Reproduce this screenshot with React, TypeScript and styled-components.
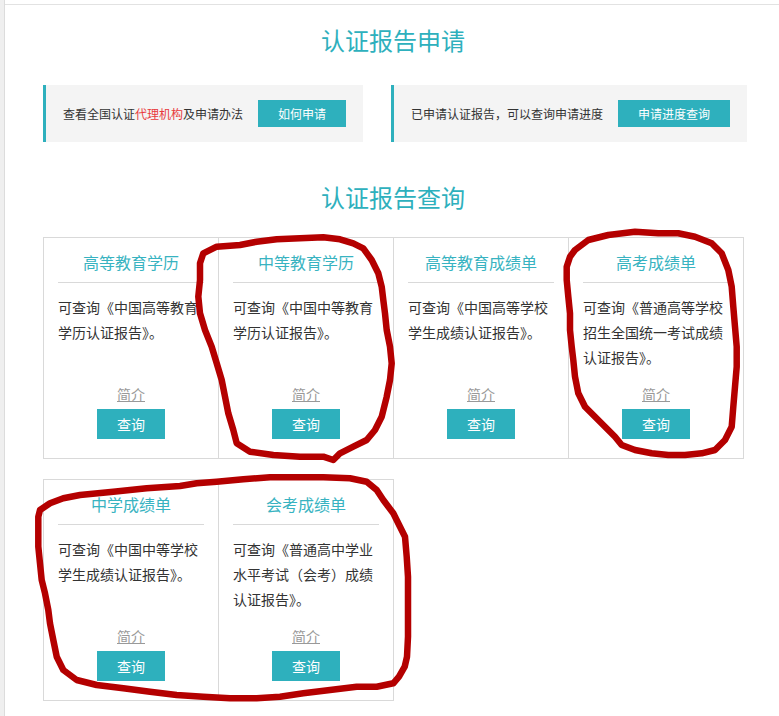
import React from "react";
import styled, { createGlobalStyle } from "styled-components";

const TEAL = "#2eb0bd";

const GlobalStyle = createGlobalStyle`
  html, body {
    margin: 0;
    padding: 0;
    background: #ffffff;
  }
  body {
    font-family: "Noto Sans CJK SC", "Noto Sans", sans-serif;
    color: #333333;
  }
  * { box-sizing: border-box; }
`;

const Page = styled.div`
  position: relative;
  display: flex;
  min-height: 716px;
  width: 779px;
  overflow: hidden;
`;

const LeftStrip = styled.div`
  width: 4px;
  flex: none;
  background: #efefef;
`;

const Main = styled.div`
  flex: 1;
  border-left: 1px solid #dcdcdc;
`;

const Inner = styled.div`
  margin-top: 4px;
  border-top: 1px solid #e2e2e2;
  padding: 18px 0 20px 38px;
`;

const Column = styled.div`
  width: 701px;
`;

const SectionTitle = styled.h2<{ $gap: number }>`
  margin: ${(p) => p.$gap}px 0 0;
  width: 700px;
  text-align: center;
  font-size: 24px;
  line-height: 34px;
  font-weight: 400;
  color: ${TEAL};
`;

const ApplyRow = styled.div`
  display: flex;
  gap: 28px;
  margin-top: 28px;
`;

const ApplyBox = styled.div`
  flex: none;
  display: flex;
  align-items: center;
  gap: 15px;
  height: 57px;
  padding: 0 17px;
  background: #f4f4f4;
  border-left: 3px solid ${TEAL};
`;

const ApplyText = styled.span`
  font-size: 12px;
  line-height: 18px;
  color: #333333;
  white-space: nowrap;
`;

const Highlight = styled.span`
  color: #e8393c;
`;

const ApplyButton = styled.a`
  display: block;
  height: 27px;
  padding: 0 20px;
  background: ${TEAL};
  color: #ffffff;
  font-size: 12px;
  line-height: 27px;
  text-decoration: none;
  white-space: nowrap;
`;

const CardGrid = styled.div`
  display: flex;
  flex-wrap: wrap;
  row-gap: 20px;
  margin-top: 23px;
  width: 701px;
`;

const Card = styled.div`
  width: 176px;
  height: 222px;
  margin-right: -1px;
  border: 1px solid #d9d9d9;
  padding: 12px 14px 19px;
  display: flex;
  flex-direction: column;
  background: #ffffff;
`;

const CardTitle = styled.div`
  font-size: 16px;
  line-height: 24px;
  padding-bottom: 8px;
  border-bottom: 1px solid #d9d9d9;
  text-align: center;
  color: #38b3c1;
`;

const CardDesc = styled.p`
  flex: 1;
  margin: 12px 0 0;
  font-size: 14px;
  line-height: 25px;
  color: #333333;
`;

const CardFooter = styled.div`
  display: flex;
  flex-direction: column;
  align-items: center;
  gap: 5px;
`;

const IntroLink = styled.a`
  font-size: 14px;
  line-height: 20px;
  color: #999999;
  text-decoration: underline;
`;

const QueryButton = styled.a`
  display: block;
  width: 68px;
  height: 30px;
  background: ${TEAL};
  color: #ffffff;
  font-size: 14px;
  line-height: 30px;
  text-align: center;
  text-decoration: none;
`;

const Annotations = styled.svg`
  position: absolute;
  left: 0;
  top: 0;
  width: 779px;
  height: 716px;
  pointer-events: none;
`;

const cards = [
  { title: "高等教育学历", desc: "可查询《中国高等教育学历认证报告》。" },
  { title: "中等教育学历", desc: "可查询《中国中等教育学历认证报告》。" },
  { title: "高等教育成绩单", desc: "可查询《中国高等学校学生成绩认证报告》。" },
  { title: "高考成绩单", desc: "可查询《普通高等学校招生全国统一考试成绩认证报告》。" },
  { title: "中学成绩单", desc: "可查询《中国中等学校学生成绩认证报告》。" },
  { title: "会考成绩单", desc: "可查询《普通高中学业水平考试（会考）成绩认证报告》。" },
];

const loops: number[][][] = [
  [
    [203.3, 253.3], [216.7, 246.7], [240, 245], [256.7, 241.7], [276.7, 239.3], [300, 238.3],
    [323.3, 237.3], [340, 239.3], [353.3, 243.3], [363.3, 248.3], [371.7, 260], [378.3, 273.3],
    [381.7, 286.7], [383.3, 300], [385, 313.3], [386.7, 330], [390, 346.7], [391.7, 363.3],
    [390, 380], [386.7, 396.7], [381.7, 416.7], [375, 430], [366.7, 440], [353.3, 446.7],
    [340, 453.3], [333.3, 460], [323.3, 456.7], [300, 456.7], [273.3, 455], [250, 451.7],
    [236.7, 443.3], [233.3, 430], [228.3, 413.3], [225, 396.7], [221.7, 380], [216.7, 363.3],
    [211.7, 346.7], [205, 330], [200, 313.3], [198.3, 296.7], [200, 280], [200, 263.3],
  ],
  [
    [575, 250], [588.3, 240], [608.3, 235], [635, 231.7], [658.3, 233.3], [678.3, 233.3],
    [695, 236.7], [711.7, 243.3], [721.7, 253.3], [728.3, 270], [731.7, 286.7], [733.3, 306.7],
    [735, 326.7], [736.7, 346.7], [736.7, 366.7], [735, 386.7], [733.3, 406.7], [731.7, 426.7],
    [725, 440], [715, 450], [701.7, 453.3], [685, 455], [668.3, 455], [651.7, 453.3],
    [635, 450], [621.7, 445], [615, 436.7], [605, 426.7], [595, 416.7], [585, 406.7],
    [578.3, 393.3], [575, 376.7], [573.3, 360], [571.7, 346.7], [570, 330], [570, 313.3],
    [568.3, 296.7], [566.7, 280], [566.7, 266.7], [570, 256.7],
  ],
  [
    [40, 510], [50, 503.3], [63.3, 498.3], [80, 495], [113.3, 491.7], [146.7, 488.3],
    [180, 486], [196.7, 483.3], [216.7, 481.7], [243.3, 479.3], [270, 477.3], [296.7, 477.3],
    [323.3, 477.3], [350, 478.3], [366.7, 481.7], [376.7, 490], [383.3, 500], [393.3, 513.3],
    [400, 526.7], [405, 536.7], [406.7, 556.7], [408, 576.7], [408, 596.7], [408, 616.7],
    [408, 636.7], [407, 656.7], [404.7, 666.7], [399, 676.7], [393.3, 683.3], [376.7, 686.7],
    [356.7, 686.7], [330, 690], [303.3, 693.3], [280, 696.7], [256.7, 698.3], [230, 698.3],
    [203.3, 696.7], [176.7, 695], [150, 691.7], [123.3, 688.3], [96.7, 685], [76.7, 680],
    [63.3, 670], [56.7, 656.7], [53.3, 640], [50, 623.3], [48.3, 610], [45, 593.3],
    [41.7, 580], [40, 563.3], [38.3, 546.7], [38.3, 530], [38.3, 516.7],
  ],
];

const toPath = (pts: number[][]) =>
  pts.map((p, i) => `${i === 0 ? "M" : "L"}${p[0]} ${p[1]}`).join(" ") + " Z";

export default function App() {
  return (
    <>
      <GlobalStyle />
      <Page>
        <LeftStrip />
        <Main>
          <Inner>
            <Column>
              <SectionTitle $gap={0}>认证报告申请</SectionTitle>
              <ApplyRow>
                <ApplyBox>
                  <ApplyText>
                    查看全国认证<Highlight>代理机构</Highlight>及申请办法
                  </ApplyText>
                  <ApplyButton>如何申请</ApplyButton>
                </ApplyBox>
                <ApplyBox>
                  <ApplyText>已申请认证报告，可以查询申请进度</ApplyText>
                  <ApplyButton>申请进度查询</ApplyButton>
                </ApplyBox>
              </ApplyRow>
              <SectionTitle $gap={38}>认证报告查询</SectionTitle>
              <CardGrid>
                {cards.map((c) => (
                  <Card key={c.title}>
                    <CardTitle>{c.title}</CardTitle>
                    <CardDesc>{c.desc}</CardDesc>
                    <CardFooter>
                      <IntroLink>简介</IntroLink>
                      <QueryButton>查询</QueryButton>
                    </CardFooter>
                  </Card>
                ))}
              </CardGrid>
            </Column>
          </Inner>
        </Main>
        <Annotations viewBox="0 0 779 716">
          {loops.map((pts, i) => (
            <path
              key={i}
              d={toPath(pts)}
              fill="none"
              stroke="#b40000"
              strokeWidth={6.5}
              strokeLinejoin="round"
              strokeLinecap="round"
            />
          ))}
        </Annotations>
      </Page>
    </>
  );
}
